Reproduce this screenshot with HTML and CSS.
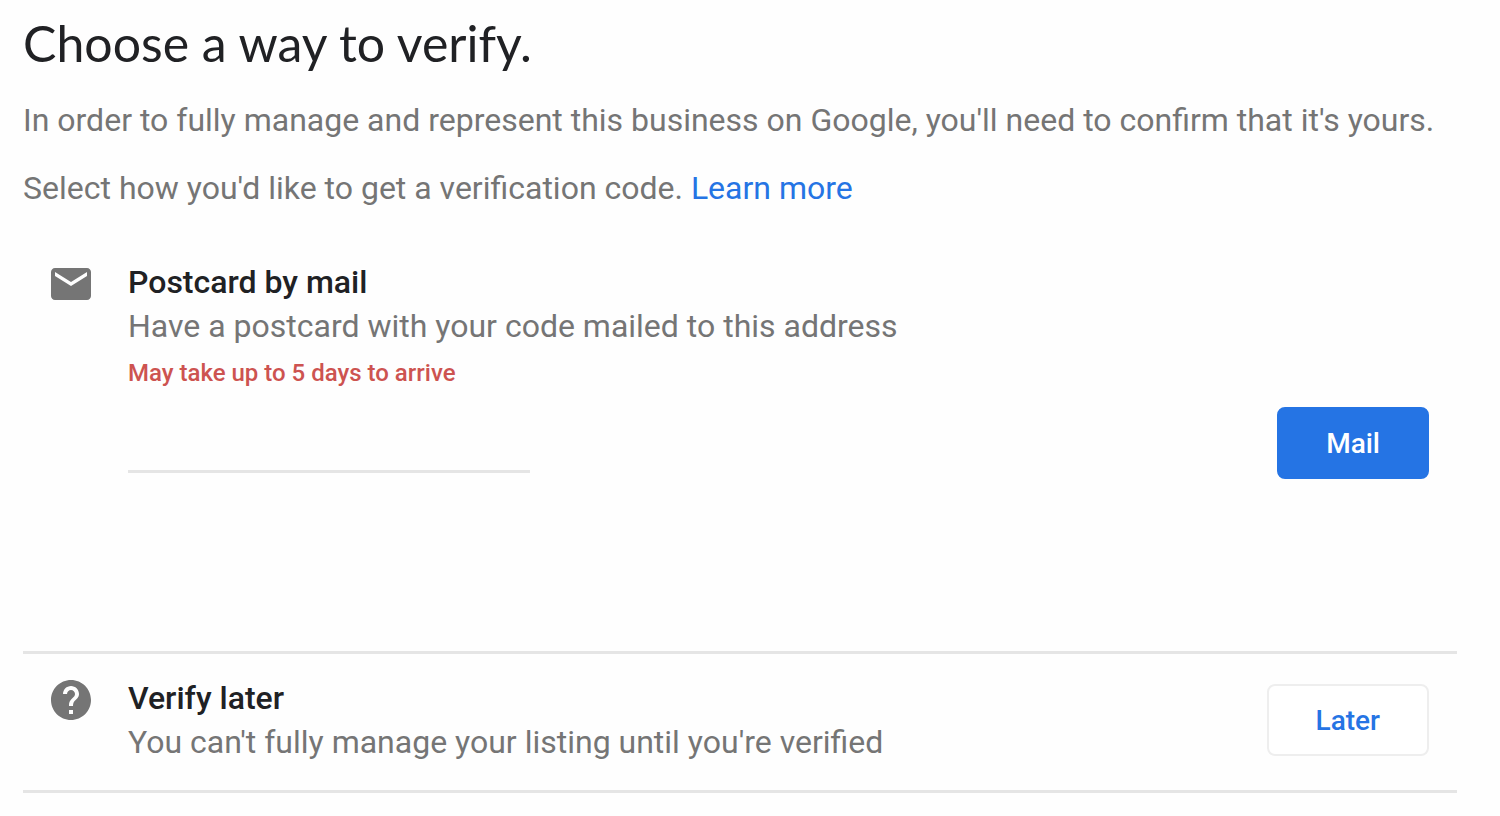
FILE: index.html
```html
<!DOCTYPE html>
<html lang="en">
<head>
  <meta charset="UTF-8" />
  <title>Choose a way to verify</title>
  <meta name="viewport" content="width=device-width, initial-scale=1.0" />
  <link rel="stylesheet" href="styles.css">
</head>
<body>
  <main>
    <h1>Choose a way to verify.</h1>
    <p class="intro">In order to fully manage and represent this business on Google, you'll need to confirm that it's yours.</p>
    <p class="intro">Select how you'd like to get a verification code. <a href="#">Learn more</a></p>

    <section class="option postcard">
      <svg class="icon" viewBox="0 0 24 24" aria-hidden="true">
        <path d="M20 4H4c-1.1 0-1.99.9-1.99 2L2 18c0 1.1.9 2 2 2h16c1.1 0 2-.9 2-2V6c0-1.1-.9-2-2-2zm0 4l-8 5-8-5V6l8 5 8-5v2z"/>
      </svg>
      <div class="details">
        <h2>Postcard by mail</h2>
        <p>Have a postcard with your code mailed to this address</p>
        <p class="note">May take up to 5 days to arrive</p>
        <input class="contact" type="text" aria-label="Contact name">
      </div>
      <button class="btn primary" type="button">Mail</button>
    </section>

    <section class="option later">
      <svg class="icon" viewBox="0 0 24 24" aria-hidden="true">
        <path d="M12 2C6.48 2 2 6.48 2 12s4.48 10 10 10 10-4.48 10-10S17.52 2 12 2zm1 17h-2v-2h2v2zm2.07-7.75l-.9.92C13.45 12.9 13 13.5 13 15h-2v-.5c0-1.1.45-2.1 1.17-2.83l1.24-1.26c.37-.36.59-.86.59-1.41 0-1.1-.9-2-2-2s-2 .9-2 2H8c0-2.21 1.79-4 4-4s4 1.79 4 4c0 .88-.36 1.68-.93 2.25z"/>
      </svg>
      <div class="details">
        <h2>Verify later</h2>
        <p>You can't fully manage your listing until you're verified</p>
      </div>
      <button class="btn" type="button">Later</button>
    </section>
  </main>
</body>
</html>
```
FILE: styles.css
```css
:root {
  --text: #202124;
  --muted: #757575;
  --blue: #2574e4;
  --red: #cd5350;
  --border: #e5e5e5;
}
* {
  box-sizing: border-box;
}
body {
  margin: 0;
  padding: 12px 43px 20px 23px;
  font-family: Roboto, sans-serif;
  font-size: 32px;
  line-height: 44px;
  color: var(--muted);
  background: #fefefe;
}
h1, h2, p {
  margin: 0;
}
h1 {
  margin-bottom: 24px;
  font-family: Lato, sans-serif;
  font-size: 50px;
  line-height: 62px;
  font-weight: 400;
  color: var(--text);
}
h2 {
  font-size: 32px;
  font-weight: 500;
  color: var(--text);
}
a {
  color: var(--blue);
  text-decoration: none;
}
.intro {
  margin-bottom: 24px;
}
.option {
  display: flex;
  align-items: flex-start;
  padding: 26px 28px;
  border-bottom: 3px solid var(--border);
}
.icon {
  flex: none;
  width: 48px;
  height: 48px;
  margin-right: 33px;
  margin-left: -4px;
  fill: var(--muted);
}
.details {
  flex: 1;
}
.postcard {
  padding-bottom: 172px;
}
.postcard .details {
  padding-bottom: 6px;
}
.later {
  padding-top: 22px;
}
.note {
  margin-top: 3px;
  font-size: 24px;
  font-weight: 500;
  color: var(--red);
}
.contact {
  display: block;
  width: 402px;
  height: 78px;
  border: 0;
  border-bottom: 3px solid var(--border);
  background: none;
  font: inherit;
  color: var(--text);
}
.btn {
  align-self: center;
  height: 72px;
  padding: 0 47px;
  border: 2px solid #eee;
  border-radius: 8px;
  background: #fff;
  font-family: Roboto, sans-serif;
  font-size: 28px;
  font-weight: 500;
  color: var(--blue);
  cursor: pointer;
}
.btn.primary {
  align-self: flex-end;
  border-color: var(--blue);
  background: var(--blue);
  color: #fff;
}
```
